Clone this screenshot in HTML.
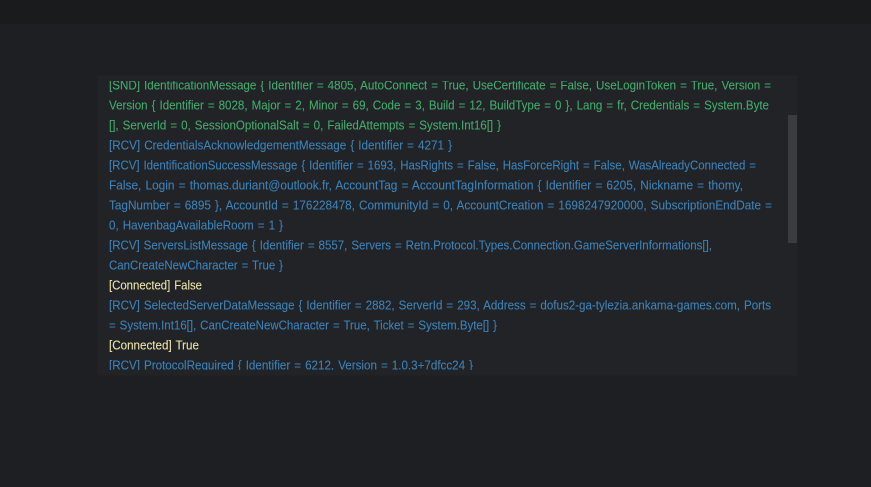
<!DOCTYPE html>
<html>
<head>
<meta charset="utf-8">
<style>
html,body{margin:0;padding:0;width:871px;height:487px;overflow:hidden;background:#1d1f22;}
#top{position:absolute;left:0;top:0;width:871px;height:24px;background:#1a1b1d;}
#panel{position:absolute;left:98px;top:76px;width:699px;height:299px;background:#212327;box-shadow:0 0 0 1px #1f2124;}
#thumb{position:absolute;left:788px;top:115px;width:9px;height:128px;background:#3a3c40;}
svg{position:absolute;left:0;top:0;}
text{font-family:"Liberation Sans",sans-serif;font-size:13px;word-spacing:0.9px;stroke-width:0.1px;}
.g{fill:#42ab6b;stroke:#42ab6b;}
.b{fill:#3c82b8;stroke:#3c82b8;}
.y{fill:#ebe3a8;stroke:#ebe3a8;}
</style>
</head>
<body>
<div id="top"></div>
<div id="panel"></div>
<div id="thumb"></div>
<svg width="871" height="487" viewBox="0 0 871 487">
<defs><clipPath id="c"><rect x="98" y="81" width="690" height="289"/></clipPath></defs>
<g clip-path="url(#c)">
<text class="g" x="109" y="89.5" textLength="662" lengthAdjust="spacingAndGlyphs">[SND] IdentificationMessage { Identifier = 4805, AutoConnect = True, UseCertificate = False, UseLoginToken = True, Version =</text>
<text class="g" x="109" y="109.5" textLength="660" lengthAdjust="spacingAndGlyphs">Version { Identifier = 8028, Major = 2, Minor = 69, Code = 3, Build = 12, BuildType = 0 }, Lang = fr, Credentials = System.Byte</text>
<text class="g" x="109" y="129.5" textLength="392" lengthAdjust="spacingAndGlyphs">[], ServerId = 0, SessionOptionalSalt = 0, FailedAttempts = System.Int16[] }</text>
<text class="b" x="109" y="149.5" textLength="343" lengthAdjust="spacingAndGlyphs">[RCV] CredentialsAcknowledgementMessage { Identifier = 4271 }</text>
<text class="b" x="109" y="169.5" textLength="647" lengthAdjust="spacingAndGlyphs">[RCV] IdentificationSuccessMessage { Identifier = 1693, HasRights = False, HasForceRight = False, WasAlreadyConnected =</text>
<text class="b" x="109" y="189.5" textLength="634" lengthAdjust="spacingAndGlyphs">False, Login = thomas.duriant@outlook.fr, AccountTag = AccountTagInformation { Identifier = 6205, Nickname = thomy,</text>
<text class="b" x="109" y="209.5" textLength="663" lengthAdjust="spacingAndGlyphs">TagNumber = 6895 }, AccountId = 176228478, CommunityId = 0, AccountCreation = 1698247920000, SubscriptionEndDate =</text>
<text class="b" x="109" y="229.5" textLength="174" lengthAdjust="spacingAndGlyphs">0, HavenbagAvailableRoom = 1 }</text>
<text class="b" x="109" y="249.5" textLength="603" lengthAdjust="spacingAndGlyphs">[RCV] ServersListMessage { Identifier = 8557, Servers = Retn.Protocol.Types.Connection.GameServerInformations[],</text>
<text class="b" x="109" y="269.5" textLength="174" lengthAdjust="spacingAndGlyphs">CanCreateNewCharacter = True }</text>
<text class="y" x="109" y="289.5" textLength="93" lengthAdjust="spacingAndGlyphs">[Connected] False</text>
<text class="b" x="109" y="309.5" textLength="662" lengthAdjust="spacingAndGlyphs">[RCV] SelectedServerDataMessage { Identifier = 2882, ServerId = 293, Address = dofus2-ga-tylezia.ankama-games.com, Ports</text>
<text class="b" x="109" y="329.5" textLength="388" lengthAdjust="spacingAndGlyphs">= System.Int16[], CanCreateNewCharacter = True, Ticket = System.Byte[] }</text>
<text class="y" x="109" y="349.5" textLength="90" lengthAdjust="spacingAndGlyphs">[Connected] True</text>
<text class="b" x="109" y="369.5" textLength="364" lengthAdjust="spacingAndGlyphs">[RCV] ProtocolRequired { Identifier = 6212, Version = 1.0.3+7dfcc24 }</text>
</g>
</svg>
</body>
</html>
